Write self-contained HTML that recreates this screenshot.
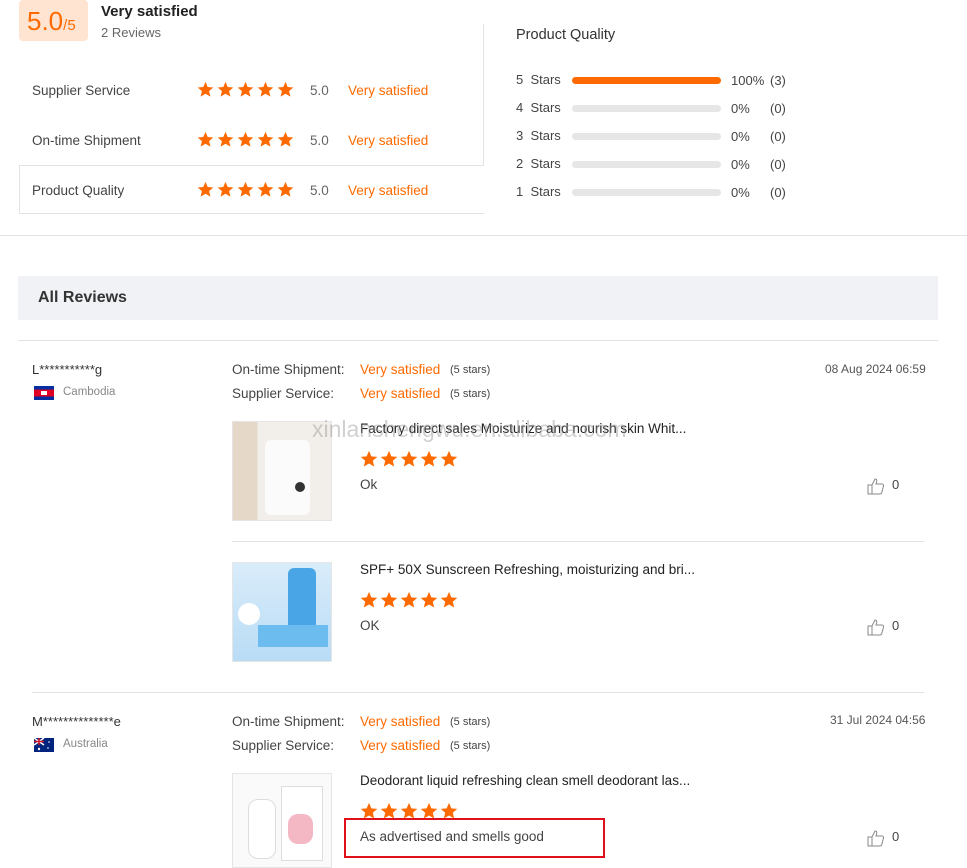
<!DOCTYPE html>
<html><head><meta charset="utf-8"><style>
*{margin:0;padding:0;box-sizing:border-box}
body{width:967px;height:864px;overflow:hidden;background:#fff;font-family:"Liberation Sans",Arial,sans-serif;color:#333;position:relative}
.a{position:absolute;white-space:nowrap}
.or{color:#ff6a00}
.g{color:#666}
.st{position:absolute;display:flex;gap:3px}
.st svg{display:block}
.bar{position:absolute;left:572px;width:149px;height:7px;border-radius:4px;background:#e6e6e6}
.img{position:absolute;width:100px;height:100px;background:#eee;border:1px solid #e5e5e5}
</style></head><body>
<svg width="0" height="0" style="position:absolute"><defs><path id="s" d="M10 1l2.6 6.1 6.6.5-5 4.3 1.6 6.5L10 15l-5.8 3.4 1.6-6.5-5-4.3 6.6-.5z" fill="#ff6a00"/></defs></svg>

<div class="a" style="left:19px;top:0;width:69px;height:41px;background:#ffe4d2;border-radius:4px"></div>
<div class="a or" style="left:27px;top:6px;font-size:26px">5.0<span style="font-size:15px">/5</span></div>
<div class="a" style="left:101px;top:3px;font-size:15px;font-weight:bold;color:#222">Very satisfied</div>
<div class="a g" style="left:101px;top:25px;font-size:13px">2 Reviews</div>

<div class="a" style="left:19px;top:165px;width:465px;height:49px;border:1px solid #e3e3e3;border-right:none"></div>
<div class="a" style="left:483px;top:24px;width:1px;height:142px;background:#e3e3e3"></div>

<div class="a" style="left:32px;top:83px;font-size:13.5px;color:#444">Supplier Service</div>
<div class="a" style="left:32px;top:133px;font-size:13.5px;color:#444">On-time Shipment</div>
<div class="a" style="left:32px;top:183px;font-size:13.5px;color:#444">Product Quality</div>
<div class="st" style="left:197px;top:81px"><svg width="17" height="17" viewBox="0 0 20 20"><use href="#s"/></svg><svg width="17" height="17" viewBox="0 0 20 20"><use href="#s"/></svg><svg width="17" height="17" viewBox="0 0 20 20"><use href="#s"/></svg><svg width="17" height="17" viewBox="0 0 20 20"><use href="#s"/></svg><svg width="17" height="17" viewBox="0 0 20 20"><use href="#s"/></svg></div>
<div class="st" style="left:197px;top:131px"><svg width="17" height="17" viewBox="0 0 20 20"><use href="#s"/></svg><svg width="17" height="17" viewBox="0 0 20 20"><use href="#s"/></svg><svg width="17" height="17" viewBox="0 0 20 20"><use href="#s"/></svg><svg width="17" height="17" viewBox="0 0 20 20"><use href="#s"/></svg><svg width="17" height="17" viewBox="0 0 20 20"><use href="#s"/></svg></div>
<div class="st" style="left:197px;top:181px"><svg width="17" height="17" viewBox="0 0 20 20"><use href="#s"/></svg><svg width="17" height="17" viewBox="0 0 20 20"><use href="#s"/></svg><svg width="17" height="17" viewBox="0 0 20 20"><use href="#s"/></svg><svg width="17" height="17" viewBox="0 0 20 20"><use href="#s"/></svg><svg width="17" height="17" viewBox="0 0 20 20"><use href="#s"/></svg></div>
<div class="a g" style="left:310px;top:83px;font-size:13.5px">5.0</div>
<div class="a g" style="left:310px;top:133px;font-size:13.5px">5.0</div>
<div class="a g" style="left:310px;top:183px;font-size:13.5px">5.0</div>
<div class="a or" style="left:348px;top:83px;font-size:13.5px">Very satisfied</div>
<div class="a or" style="left:348px;top:133px;font-size:13.5px">Very satisfied</div>
<div class="a or" style="left:348px;top:183px;font-size:13.5px">Very satisfied</div>

<div class="a" style="left:516px;top:27px;font-size:14.5px;color:#333">Product Quality</div>
<div class="a" style="left:516px;top:72px;font-size:13px;color:#444">5&nbsp; Stars</div>
<div class="a" style="left:516px;top:100px;font-size:13px;color:#444">4&nbsp; Stars</div>
<div class="a" style="left:516px;top:128px;font-size:13px;color:#444">3&nbsp; Stars</div>
<div class="a" style="left:516px;top:156px;font-size:13px;color:#444">2&nbsp; Stars</div>
<div class="a" style="left:516px;top:184px;font-size:13px;color:#444">1&nbsp; Stars</div>
<div class="bar" style="top:77px;background:#ff6a00"></div>
<div class="bar" style="top:105px"></div>
<div class="bar" style="top:133px"></div>
<div class="bar" style="top:161px"></div>
<div class="bar" style="top:189px"></div>
<div class="a" style="left:731px;top:73px;font-size:13px;color:#444">100%</div>
<div class="a" style="left:731px;top:101px;font-size:13px;color:#444">0%</div>
<div class="a" style="left:731px;top:129px;font-size:13px;color:#444">0%</div>
<div class="a" style="left:731px;top:157px;font-size:13px;color:#444">0%</div>
<div class="a" style="left:731px;top:185px;font-size:13px;color:#444">0%</div>
<div class="a" style="left:770px;top:73px;font-size:13px;color:#444">(3)</div>
<div class="a" style="left:770px;top:101px;font-size:13px;color:#444">(0)</div>
<div class="a" style="left:770px;top:129px;font-size:13px;color:#444">(0)</div>
<div class="a" style="left:770px;top:157px;font-size:13px;color:#444">(0)</div>
<div class="a" style="left:770px;top:185px;font-size:13px;color:#444">(0)</div>

<div class="a" style="left:0;top:235px;width:967px;height:1px;background:#e3e3e3"></div>
<div class="a" style="left:18px;top:276px;width:920px;height:44px;background:#f0f2f5"></div>
<div class="a" style="left:38px;top:289px;font-size:16px;font-weight:bold;color:#333">All Reviews</div>
<div class="a" style="left:18px;top:340px;width:920px;height:1px;background:#e3e3e3"></div>

<!-- review 1 -->
<div class="a" style="left:32px;top:362px;font-size:13px;color:#333">L***********g</div>
<svg class="a" style="left:34px;top:386px" width="20" height="14"><rect width="20" height="14" fill="#032ea1"/><rect y="3.5" width="20" height="7" fill="#e00025"/><rect x="7" y="5" width="6" height="4" fill="#fff"/></svg>
<div class="a" style="left:63px;top:386px;font-size:11.5px;color:#888">Cambodia</div>
<div class="a" style="left:232px;top:362px;font-size:13.5px;color:#444">On-time Shipment:</div>
<div class="a" style="left:232px;top:386px;font-size:13.5px;color:#444">Supplier Service:</div>
<div class="a or" style="left:360px;top:362px;font-size:13.5px">Very satisfied</div>
<div class="a or" style="left:360px;top:386px;font-size:13.5px">Very satisfied</div>
<div class="a" style="left:450px;top:364px;font-size:11px;color:#444">(5 stars)</div>
<div class="a" style="left:450px;top:388px;font-size:11px;color:#444">(5 stars)</div>
<div class="a" style="left:825px;top:362px;font-size:12px;color:#555">08 Aug 2024 06:59</div>

<div class="img" style="left:232px;top:421px;background:linear-gradient(90deg,#e6d8c8 0 25%,#f2eee9 25%)"><div style="position:absolute;left:32px;top:18px;width:45px;height:75px;background:#fbfbfb;border-radius:6px"></div><div style="position:absolute;left:62px;top:60px;width:10px;height:10px;border-radius:5px;background:#333"></div></div>
<div class="a" style="left:360px;top:421px;font-size:13.5px;color:#222">Factory direct sales Moisturize and nourish skin Whit...</div>
<div class="a" style="left:312px;top:416px;font-size:23px;color:rgba(150,150,150,.45)">xinlanshengwu.en.alibaba.com</div>
<div class="st" style="left:360px;top:450px;gap:2px"><svg width="18" height="18" viewBox="0 0 20 20"><use href="#s"/></svg><svg width="18" height="18" viewBox="0 0 20 20"><use href="#s"/></svg><svg width="18" height="18" viewBox="0 0 20 20"><use href="#s"/></svg><svg width="18" height="18" viewBox="0 0 20 20"><use href="#s"/></svg><svg width="18" height="18" viewBox="0 0 20 20"><use href="#s"/></svg></div>
<div class="a" style="left:360px;top:477px;font-size:13.5px;color:#444">Ok</div>
<svg class="a" style="left:867px;top:477px" width="18" height="18" viewBox="0 0 18 18" fill="none" stroke="#888" stroke-width="1"><path d="M1 8h4v9H1zM5 8l3-6c1.5 0 2 1 1.7 2.5L9 7h6c1.2 0 1.8 1 1.5 2l-1.7 6.5c-.3 1-1 1.5-2 1.5H5"/></svg>
<div class="a" style="left:892px;top:477px;font-size:13px;color:#444">0</div>
<div class="a" style="left:232px;top:541px;width:692px;height:1px;background:#e3e3e3"></div>

<div class="img" style="left:232px;top:562px;background:linear-gradient(180deg,#d9ecfa,#b9dcf5)"><div style="position:absolute;left:55px;top:5px;width:28px;height:62px;background:#4aa5e6;border-radius:6px"></div><div style="position:absolute;left:25px;top:62px;width:70px;height:22px;background:#6cbcf0"></div><div style="position:absolute;left:5px;top:40px;width:22px;height:22px;border-radius:11px;background:#fff"></div></div>
<div class="a" style="left:360px;top:562px;font-size:13.5px;color:#222">SPF+ 50X Sunscreen Refreshing, moisturizing and bri...</div>
<div class="st" style="left:360px;top:591px;gap:2px"><svg width="18" height="18" viewBox="0 0 20 20"><use href="#s"/></svg><svg width="18" height="18" viewBox="0 0 20 20"><use href="#s"/></svg><svg width="18" height="18" viewBox="0 0 20 20"><use href="#s"/></svg><svg width="18" height="18" viewBox="0 0 20 20"><use href="#s"/></svg><svg width="18" height="18" viewBox="0 0 20 20"><use href="#s"/></svg></div>
<div class="a" style="left:360px;top:618px;font-size:13.5px;color:#444">OK</div>
<svg class="a" style="left:867px;top:618px" width="18" height="18" viewBox="0 0 18 18" fill="none" stroke="#888" stroke-width="1"><path d="M1 8h4v9H1zM5 8l3-6c1.5 0 2 1 1.7 2.5L9 7h6c1.2 0 1.8 1 1.5 2l-1.7 6.5c-.3 1-1 1.5-2 1.5H5"/></svg>
<div class="a" style="left:892px;top:618px;font-size:13px;color:#444">0</div>
<div class="a" style="left:32px;top:692px;width:892px;height:1px;background:#e3e3e3"></div>

<!-- review 2 -->
<div class="a" style="left:32px;top:714px;font-size:13px;color:#333">M**************e</div>
<svg class="a" style="left:34px;top:738px" width="20" height="14"><rect width="20" height="14" fill="#00247d"/><path d="M0 0l10 7M10 0L0 7" stroke="#fff" stroke-width="1.5"/><path d="M5 0v7M0 3.5h10" stroke="#cf142b" stroke-width="1.5"/><circle cx="15" cy="4" r=".8" fill="#fff"/><circle cx="14" cy="10" r=".8" fill="#fff"/><circle cx="5" cy="11" r="1.2" fill="#fff"/></svg>
<div class="a" style="left:63px;top:738px;font-size:11.5px;color:#888">Australia</div>
<div class="a" style="left:232px;top:714px;font-size:13.5px;color:#444">On-time Shipment:</div>
<div class="a" style="left:232px;top:738px;font-size:13.5px;color:#444">Supplier Service:</div>
<div class="a or" style="left:360px;top:714px;font-size:13.5px">Very satisfied</div>
<div class="a or" style="left:360px;top:738px;font-size:13.5px">Very satisfied</div>
<div class="a" style="left:450px;top:716px;font-size:11px;color:#444">(5 stars)</div>
<div class="a" style="left:450px;top:740px;font-size:11px;color:#444">(5 stars)</div>
<div class="a" style="left:830px;top:713px;font-size:12px;color:#555">31 Jul 2024 04:56</div>

<div class="img" style="left:232px;top:773px;height:95px;background:#fafafa"><div style="position:absolute;left:15px;top:25px;width:28px;height:60px;background:#fff;border:1px solid #ddd;border-radius:10px"></div><div style="position:absolute;left:48px;top:12px;width:42px;height:75px;background:#fff;border:1px solid #ddd"></div><div style="position:absolute;left:55px;top:40px;width:25px;height:30px;background:#f4b8c4;border-radius:10px"></div></div>
<div class="a" style="left:360px;top:773px;font-size:13.5px;color:#222">Deodorant liquid refreshing clean smell deodorant las...</div>
<div class="st" style="left:360px;top:802px;gap:2px"><svg width="18" height="18" viewBox="0 0 20 20"><use href="#s"/></svg><svg width="18" height="18" viewBox="0 0 20 20"><use href="#s"/></svg><svg width="18" height="18" viewBox="0 0 20 20"><use href="#s"/></svg><svg width="18" height="18" viewBox="0 0 20 20"><use href="#s"/></svg><svg width="18" height="18" viewBox="0 0 20 20"><use href="#s"/></svg></div>
<div class="a" style="left:344px;top:818px;width:261px;height:40px;border:2px solid #e0101a"></div>
<div class="a" style="left:360px;top:829px;font-size:13.5px;color:#444">As advertised and smells good</div>
<svg class="a" style="left:867px;top:829px" width="18" height="18" viewBox="0 0 18 18" fill="none" stroke="#888" stroke-width="1"><path d="M1 8h4v9H1zM5 8l3-6c1.5 0 2 1 1.7 2.5L9 7h6c1.2 0 1.8 1 1.5 2l-1.7 6.5c-.3 1-1 1.5-2 1.5H5"/></svg>
<div class="a" style="left:892px;top:829px;font-size:13px;color:#444">0</div>
</body></html>
